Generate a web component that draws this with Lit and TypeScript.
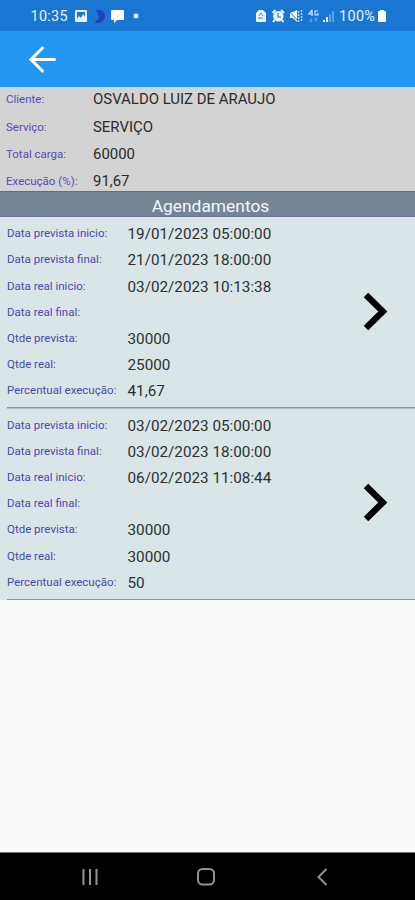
import { LitElement, html, css } from "lit";
import { customElement, property } from "lit/decorators.js";

type Field = [label: string, value: string];

const summary: Field[] = [
  ["Cliente:", "OSVALDO LUIZ DE ARAUJO"],
  ["Serviço:", "SERVIÇO"],
  ["Total carga:", "60000"],
  ["Execução (%):", "91,67"],
];

const labels = [
  "Data prevista inicio:",
  "Data prevista final:",
  "Data real inicio:",
  "Data real final:",
  "Qtde prevista:",
  "Qtde real:",
  "Percentual execução:",
];

const schedules: string[][] = [
  ["19/01/2023 05:00:00", "21/01/2023 18:00:00", "03/02/2023 10:13:38", "", "30000", "25000", "41,67"],
  ["03/02/2023 05:00:00", "03/02/2023 18:00:00", "06/02/2023 11:08:44", "", "30000", "30000", "50"],
];

@customElement("status-bar")
class StatusBar extends LitElement {
  static styles = css`
    :host { display: flex; height: 31px; box-sizing: border-box; padding: 1px 28px 0 30.500px; align-items: center; background: #1976d2; color: #e8f2fc; font-size: 14.400px; letter-spacing: 0.3px; }
    svg { display: block; flex: none; }
    .clock { width: 43.500px; }
    .right { margin-left: auto; display: flex; align-items: center; }
    .percent { width: 38px; letter-spacing: 0.35px; }
  `;
  render() {
    return html`
      <span class="clock">10:35</span>
      <svg width="70" height="16" viewBox="74 8 70 16">
        <path fill="#e8f2fc" fill-rule="evenodd" d="M76 10h10q1 0 1 1v10q0 1-1 1H76q-1 0-1-1V11q0-1 1-1zM77 12v7l2-3 2 2 2-4 2 3v-5z" />
        <path fill="#263fc0" d="M96 10h5q4 2 4 6t-5 7h-5l1-3h2l1-3-1-3z" />
        <path fill="#fff" d="M112 10h11q1 0 1 1v8q0 1-1 1h-6l-3 3v-3h-2q-1 0-1-1v-8q0-1 1-1z" />
        <circle cx="136" cy="16" r="2.400" fill="#fff" />
      </svg>
      <div class="right">
        <svg width="84" height="16" viewBox="254 8 84 16">
          <path fill="#eef6ff" d="M258 10h4l3 3v8q0 1-1 1h-8q-1 0-1-1v-8z" />
          <path fill="none" stroke="#3d8bda" d="M258 16l2-3 2 3M258 18h4M258 17v2" />
          <circle cx="277.300" cy="16.200" r="5.200" fill="#eef6ff" />
          <path stroke="#eef6ff" stroke-width="2" d="M271.500 13l3-3M280 10l3 3M273.500 20l-1.500 2M281 20l1.500 2" />
          <path fill="none" stroke="#1976d2" stroke-width="1.200" d="M277 13v4h3" />
          <path fill="#eef6ff" d="M289 12h3l4-2v12l-4-4h-3z" />
          <path stroke="#1976d2" d="M288 11l10 11" />
          <path stroke="#b9d8f5" stroke-width="1.500" stroke-dasharray="2 1" d="M297.500 11v11M300.500 10v12" />
          <path fill="none" stroke="#cfe5fa" stroke-width="1.200" d="M311 10l-3 4h4M311 10v6M317 11h-3v4h3v-2" />
          <path fill="none" stroke="#72adeb" d="M310 18v4M308.500 20.500l1.500 1.500 1.500-1.500M315 22v-4M313.500 19.500l1.500-1.500 1.500 1.500" />
          <path fill="#eef6ff" d="M322 20h2v2h-2zM325 17h2v5h-2z" />
          <path fill="#5a9fe2" d="M328 14h2v8h-2zM331 11h2v11h-2z" />
        </svg>
        <span class="percent">100%</span>
        <svg width="10" height="14" viewBox="0 0 10 14">
          <path fill="#fff" d="M3 1h4v1h1q1 0 1 1v9q0 1-1 1H2q-1 0-1-1V3q0-1 1-1h1z" />
        </svg>
      </div>
    `;
  }
}

@customElement("schedule-item")
class ScheduleItem extends LitElement {
  @property({ attribute: false }) values: string[] = [];
  static styles = css`
    :host { display: flex; align-items: center; justify-content: space-between; height: 191.500px; box-sizing: border-box; padding: 0 26px 0 7px; background: linear-gradient(#8b9295, #8b9295) 7px 100% / 100% 1.500px no-repeat #dae5e7; }
    .fields { display: flex; flex-direction: column; padding-bottom: 1px; }
    .row { display: flex; height: 26.200px; align-items: center; }
    .label { width: 120.500px; font-size: 11.500px; color: #4a48b0; white-space: nowrap; padding-bottom: 1px; box-sizing: border-box; }
    .value { font-size: 15.250px; color: #2b3132; white-space: nowrap; padding-top: 1px; }
    svg { display: block; margin-bottom: 2px; }
  `;
  render() {
    return html`
      <div class="fields">
        ${labels.map((l, i) => html`<div class="row"><span class="label">${l}</span><span class="value">${this.values[i]}</span></div>`)}
      </div>
      <svg width="26" height="40" viewBox="0 0 26 40">
        <path d="M3 3L19.800 19.500 3 36" fill="none" stroke="#000" stroke-width="6.400" />
      </svg>
    `;
  }
}

@customElement("app-root")
class AppRoot extends LitElement {
  static styles = css`
    :host { display: flex; flex-direction: column; height: 900px; background: #fafafa; font-family: Roboto, sans-serif; overflow: hidden; }
    .appbar { height: 56px; flex: none; box-sizing: border-box; background: #2196f3; padding: 14px 0 0 28px; }
    .summary { height: 104px; flex: none; background: #d3d3d3; box-sizing: border-box; padding-left: 6px; display: flex; flex-direction: column; }
    .row { display: flex; height: 27.300px; flex: none; align-items: center; }
    .row:first-child { height: 23px; margin-bottom: 3px; }
    .label { width: 87px; font-size: 11.500px; color: #5949b6; white-space: nowrap; }
    .value { font-size: 14.950px; color: #2b2b2b; white-space: nowrap; }
    .section { height: 26px; flex: none; box-sizing: border-box; background: #748696; border-top: 1.500px solid #65659f; border-bottom: 1px solid #666f96; color: #f4f7fa; text-align: center; font-size: 17.400px; line-height: 28px; padding-left: 6px; }
    .list { display: flex; flex-direction: column; flex: none; }
    .nav { height: 48px; flex: none; margin-top: auto; background: #000; display: flex; border-top: 1px solid #777; box-sizing: border-box; }
    svg { display: block; }
  `;
  render() {
    return html`
      <status-bar></status-bar>
      <div class="appbar">
        <svg width="30" height="30" viewBox="0 0 30 30">
          <path d="M14.500 3L3 14.500 14.500 26M3 14.500H26.500" fill="none" stroke="#fff" stroke-width="3.100" stroke-linecap="round" />
        </svg>
      </div>
      <div class="summary">
        ${summary.map(([l, v]) => html`<div class="row"><span class="label">${l}</span><span class="value">${v}</span></div>`)}
      </div>
      <div class="section">Agendamentos</div>
      <div class="list">
        ${schedules.map((s) => html`<schedule-item .values=${s}></schedule-item>`)}
      </div>
      <div class="nav">
        <svg width="415" height="47" viewBox="0 853 415 47" fill="none" stroke="#929292" stroke-width="2">
          <path d="M83.500 869v16M90 869v16M96.500 869v16" />
          <rect x="198" y="869" width="16" height="15.500" rx="4.500" />
          <path d="M326.500 869l-8 8 8 8" />
        </svg>
      </div>
    `;
  }
}
